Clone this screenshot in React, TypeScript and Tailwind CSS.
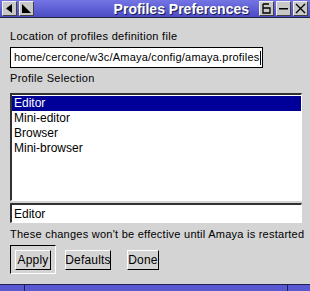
import React from 'react'

const font = { fontFamily: '"Liberation Sans", Arial, sans-serif' }

function TitleButton({ children }: { children: React.ReactNode }) {
    return (
        <div className="w-[15px] h-[15px] bg-[#c8c8c8] border-t border-l border-[#f0f0f0] border-r border-b border-r-[#404040] border-b-[#404040] flex items-center justify-center">
            {children}
        </div>
    )
}

function PushButton({ label, w }: { label: string; w: string }) {
    return (
        <div className={`${w} h-[20px] bg-[#d4d4d4] border-t border-l border-white border-r border-b border-r-black border-b-black flex items-center justify-center text-[12px] tracking-[0.2px] text-black`}>
            {label}
        </div>
    )
}

export default function App() {
    const profiles = ['Editor', 'Mini-editor', 'Browser', 'Mini-browser']

    return (
        <div className="w-[310px] h-[291px] bg-[#d4d4d4] flex flex-col overflow-hidden" style={font}>
            {/* Title bar */}
            <div className="h-[18px] bg-gradient-to-b from-[#7474e4] to-[#4c4cc4] flex items-center px-[2px] gap-[2px] border-b border-[#202040]">
                <TitleButton>
                    <svg width="11" height="11" viewBox="0 0 11 11">
                        <path d="M8 1 L2 5.5 L8 10 Z" fill="black" />
                    </svg>
                </TitleButton>
                <TitleButton>
                    <svg width="11" height="11" viewBox="0 0 11 11">
                        <path d="M1 1 L10 10 L1 10 Z" fill="black" />
                    </svg>
                </TitleButton>
                <div className="flex-1 flex justify-end pr-[8px]">
                    <span className="text-white font-bold text-[14px] leading-none [text-shadow:1px_1px_0_#1a1a50]">
                        Profiles Preferences
                    </span>
                </div>
                <TitleButton>
                    <svg width="11" height="11" viewBox="0 0 11 11" fill="none" stroke="black" strokeWidth="1.3">
                        <path d="M2 1 H8 M2 1 V10 H9 V5 H2" />
                    </svg>
                </TitleButton>
                <TitleButton>
                    <svg width="11" height="11" viewBox="0 0 11 11">
                        <rect x="1" y="5" width="9" height="1.5" fill="black" />
                    </svg>
                </TitleButton>
                <TitleButton>
                    <svg width="11" height="11" viewBox="0 0 11 11" stroke="black" strokeWidth="1.3">
                        <path d="M1 1 L10 10 M10 1 L1 10" />
                    </svg>
                </TitleButton>
            </div>

            {/* Body */}
            <div className="flex-1 flex flex-col px-[10px] text-[11px] text-black">
                <div className="mt-[11px] h-[14px] leading-[14px] tracking-[0.3px]">Location of profiles definition file</div>

                <div className="mt-[4px] w-[253px] h-[21px] bg-white border border-black flex items-center pl-[3px] overflow-hidden whitespace-nowrap tracking-[0.2px]">
                    home/cercone/w3c/Amaya/config/amaya.profiles
                    <span className="inline-block w-[1px] h-[14px] bg-black ml-[1px]" />
                </div>

                <div className="mt-[3px] h-[14px] leading-[14px] tracking-[0.3px]">Profile Selection</div>

                <div className="mt-[8px] w-[292px] h-[108px] bg-white border-t-2 border-l-2 border-[#303030] border-r border-b border-r-white border-b-white pt-[1px] text-[12px]">
                    {profiles.map((p, i) => (
                        <div
                            key={p}
                            className={i === 0 ? 'h-[15px] leading-[15px] pl-[2px] bg-[#000099] text-white' : 'h-[15px] leading-[15px] pl-[2px]'}
                        >
                            {p}
                        </div>
                    ))}
                </div>

                <div className="mt-[2px] w-[292px] h-[20px] bg-white border-t-2 border-l-2 border-[#303030] border-r border-b border-r-white border-b-white flex items-center pl-[2px] text-[12px]">
                    Editor
                </div>

                <div className="mt-[4px] h-[14px] leading-[14px] tracking-[0.25px] whitespace-nowrap">
                    These changes won't be effective until Amaya is restarted
                </div>

                <div className="mt-[4px] flex items-center">
                    <div className="w-[46px] h-[29px] border-t border-l border-black border-r border-b border-r-white border-b-white flex items-center justify-center">
                        <PushButton label="Apply" w="w-[36px]" />
                    </div>
                    <div className="ml-[9px]">
                        <PushButton label="Defaults" w="w-[46px]" />
                    </div>
                    <div className="ml-[16px]">
                        <PushButton label="Done" w="w-[32px]" />
                    </div>
                </div>
            </div>

            {/* Bottom frame */}
            <div className="h-[7px] bg-[#5858d0] border-t border-[#202050] flex">
                <div className="w-[25px] border-r border-[#202050]" />
                <div className="flex-1 border-r border-[#202050]" />
                <div className="w-[22px]" />
            </div>
        </div>
    )
}
